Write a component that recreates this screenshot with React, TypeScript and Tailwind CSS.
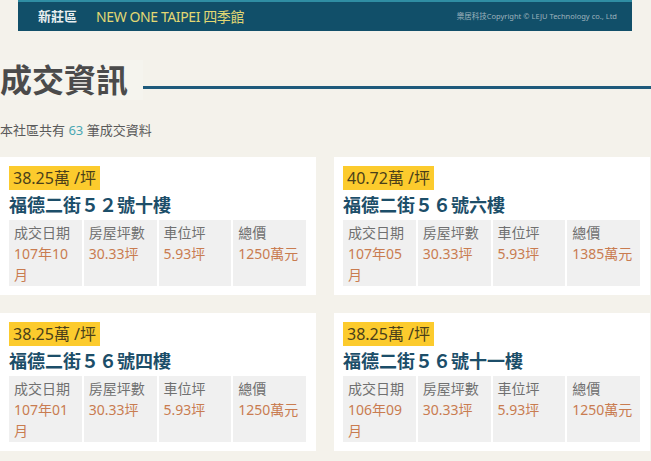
import React from "react";

type Deal = {
  unitPrice: string;
  address: string;
  date: string;
  area: string;
  parking: string;
  total: string;
};

const deals: Deal[] = [
  { unitPrice: "38.25萬 /坪", address: "福德二街５２號十樓", date: "107年10月", area: "30.33坪", parking: "5.93坪", total: "1250萬元" },
  { unitPrice: "40.72萬 /坪", address: "福德二街５６號六樓", date: "107年05月", area: "30.33坪", parking: "5.93坪", total: "1385萬元" },
  { unitPrice: "38.25萬 /坪", address: "福德二街５６號四樓", date: "107年01月", area: "30.33坪", parking: "5.93坪", total: "1250萬元" },
  { unitPrice: "38.25萬 /坪", address: "福德二街５６號十一樓", date: "106年09月", area: "30.33坪", parking: "5.93坪", total: "1250萬元" },
];

function Cell({ label, value }: { label: string; value: string }) {
  return (
    <div className="bg-[#f0f0f0] pt-[2px] pb-[1px] pl-[5px] pr-[4px] text-[14px] leading-[21px]">
      <div className="text-[#707070]">{label}</div>
      <div className="text-[#c97c50]">{value}</div>
    </div>
  );
}

function DealCard({ deal }: { deal: Deal }) {
  return (
    <div className="bg-white pt-[9px] pl-[9px] pr-[10px] pb-[9px]">
      <div className="inline-block h-[24px] bg-[#fccb2d] px-[4px] text-[16px] leading-[24px] text-[#4a3f1a]">
        {deal.unitPrice}
      </div>
      <div className="h-[30px] text-[18px] font-bold leading-[30px] text-[#1c4e69]">{deal.address}</div>
      <div className="grid grid-cols-4 gap-x-[2px]">
        <Cell label="成交日期" value={deal.date} />
        <Cell label="房屋坪數" value={deal.area} />
        <Cell label="車位坪" value={deal.parking} />
        <Cell label="總價" value={deal.total} />
      </div>
    </div>
  );
}

export default function App() {
  return (
    <div
      className="h-[461px] w-[651px] overflow-hidden bg-[#f4f2eb]"
      style={{ fontFamily: '"Noto Sans", "Noto Sans CJK TC", sans-serif' }}
    >
      {/* top bar */}
      <div className="mx-[18px] flex h-[31px] w-[614px] items-center border-t-2 border-[#2f8ea4] bg-[#114f69] pl-[20px] pr-[15px]">
        <span className="text-[13px] font-bold text-[#e8eef0]">新莊區</span>
        <span className="ml-[19px] text-[14px] tracking-[-0.4px] text-[#e2d873]">NEW ONE TAIPEI 四季館</span>
        <span className="ml-auto text-[7.5px] text-[#9fb3bd]">樂居科技Copyright © LEJU Technology co., Ltd</span>
      </div>

      {/* section title */}
      <div className="mt-[29px] flex items-center">
        <h1 className="h-[40px] bg-[#f5f4ee] pr-[15px] text-[32px] font-semibold leading-[40px] text-[#4b4b4b]">成交資訊</h1>
        <div className="mt-[14px] h-[3px] flex-1 bg-[#1e5a7b]" />
      </div>

      <p className="mt-[21px] text-[13px] leading-[18px] text-[#5a5a5a]">
        本社區共有 <span className="text-[#4aa7b3]">63</span> 筆成交資料
      </p>

      <div className="mt-[18px] grid grid-cols-[316px_316px] gap-x-[18px] gap-y-[18px]">
        {deals.map((d, i) => (
          <DealCard key={i} deal={d} />
        ))}
      </div>
    </div>
  );
}
